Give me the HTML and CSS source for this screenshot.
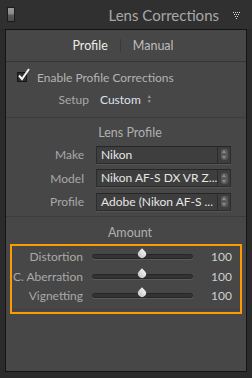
FILE: index.html
```html
<!DOCTYPE html>
<html lang="en">
<head>
  <meta charset="UTF-8">
  <title>Lens Corrections</title>
  <link rel="stylesheet" href="styles.css">
</head>
<body>
  <!-- Panel header -->
  <header class="panel-head">
    <span class="solo-switch"></span>
    <h1>Lens Corrections</h1>
    <svg class="collapse" width="8" height="8" viewBox="0 0 8 8">
      <g fill="#d8d8d8">
        <rect x="0" y="0" width="1" height="1"/><rect x="2" y="0" width="1" height="1"/><rect x="4" y="0" width="1" height="1"/><rect x="6" y="0" width="1" height="1"/>
        <rect x="1" y="2" width="1" height="1"/><rect x="3" y="2" width="1" height="1"/><rect x="5" y="2" width="1" height="1"/>
        <rect x="2" y="4" width="1" height="1"/><rect x="4" y="4" width="1" height="1"/>
        <rect x="3" y="6" width="1" height="1"/>
      </g>
    </svg>
  </header>

  <div class="panel">
    <!-- Tabs -->
    <nav class="tabs">
      <span class="tab active">Profile</span>
      <span class="tab-sep"></span>
      <span class="tab">Manual</span>
    </nav>

    <!-- Enable / setup -->
    <section class="section setup">
      <label class="check-row">
        <span class="checkbox">
          <svg width="14" height="14" viewBox="0 0 14 14"><path d="M2 7.5 L5 11 L12 1" fill="none" stroke="#f2f2f2" stroke-width="2"/></svg>
        </span>
        Enable Profile Corrections
      </label>
      <div class="setup-row">
        <span class="label">Setup</span>
        <span class="popup">Custom <span class="updown">&#9650;<br>&#9660;</span></span>
      </div>
    </section>

    <!-- Lens profile -->
    <section class="section lens">
      <h2>Lens Profile</h2>
      <div class="field">
        <span class="label">Make</span>
        <div class="select"><span class="value">Nikon</span><span class="select-btn"><i></i></span></div>
      </div>
      <div class="field">
        <span class="label">Model</span>
        <div class="select"><span class="value">Nikon AF-S DX VR Z...</span><span class="select-btn"><i></i></span></div>
      </div>
      <div class="field">
        <span class="label">Profile</span>
        <div class="select"><span class="value">Adobe (Nikon AF-S ...</span><span class="select-btn"><i></i></span></div>
      </div>
    </section>

    <!-- Amount -->
    <section class="section amount">
      <h2>Amount</h2>
      <div class="highlight">
        <div class="slider-row">
          <span class="label">Distortion</span>
          <div class="track"><span class="thumb"></span></div>
          <span class="num">100</span>
        </div>
        <div class="slider-row">
          <span class="label">C. Aberration</span>
          <div class="track"><span class="thumb"></span></div>
          <span class="num">100</span>
        </div>
        <div class="slider-row">
          <span class="label">Vignetting</span>
          <div class="track"><span class="thumb"></span></div>
          <span class="num">100</span>
        </div>
        <div class="rule"></div>
      </div>
    </section>
  </div>
</body>
</html>
```

FILE: styles.css
```css
body {
  margin: 0;
  width: 252px;
  height: 378px;
  background: #2b2b2b;
  font-family: Lato, "Open Sans", sans-serif;
  font-size: 12px;
  color: #ababab;
  overflow: hidden;
}
.panel-head {
  height: 29px;
  display: flex;
  align-items: center;
  padding: 0 11px 0 7px;
  background: #303030;
}
.solo-switch {
  width: 6px;
  height: 13px;
  border: 1px solid #1c1c1c;
  background: linear-gradient(#9a9a9a, #8a8a8a 45%, #5a5a5a 55%, #4c4c4c);
}
.panel-head h1 {
  flex: 1;
  margin: 0 14px 0 0;
  text-align: right;
  font-size: 15px;
  font-weight: normal;
  color: #a8a8a8;
}
.collapse {
  margin-top: 2px;
}
.panel {
  margin: 0 5px;
  height: 341px;
  border: 1px solid #141414;
  background: #474747;
}
.tabs {
  height: 31px;
  display: flex;
  align-items: center;
  justify-content: center;
  gap: 12px;
  font-size: 12.5px;
  border-bottom: 1px solid #353535;
  padding-right: 6px;
}
.tab {
  color: #bdbdbd;
}
.tab.active {
  color: #ececec;
}
.tab-sep {
  width: 1px;
  height: 13px;
  background: #3a3a3a;
}
.section {
  border-bottom: 1px solid #3c3c3c;
}
.section h2 {
  margin: 0;
  font-size: 12.5px;
  font-weight: normal;
  color: #b0b0b0;
  text-align: center;
  padding-left: 8px;
}
.label {
  text-align: right;
  color: #a9a9a9;
  white-space: nowrap;
}

/* enable + setup */
.setup {
  height: 55px;
}
.check-row {
  display: flex;
  align-items: center;
  height: 26px;
  padding: 4px 0 0 11px;
  color: #b3b3b3;
  box-sizing: border-box;
}
.checkbox {
  position: relative;
  width: 10px;
  height: 10px;
  border: 1px solid #151515;
  background: #2e2e2e;
  margin-right: 10px;
  box-sizing: border-box;
}
.checkbox svg {
  position: absolute;
  left: -1px;
  top: -5px;
}
.setup-row {
  display: flex;
  align-items: center;
  height: 22px;
  gap: 11px;
}
.setup-row .label {
  width: 83px;
}
.popup {
  display: flex;
  align-items: center;
  color: #dfe0ef;
  gap: 6px;
}
.updown {
  font-size: 5px;
  line-height: 5px;
  color: #9a9a9a;
}

/* lens profile */
.lens {
  height: 99px;
  padding-top: 8px;
  box-sizing: border-box;
}
.lens h2 {
  height: 14px;
  line-height: 14px;
  margin-bottom: 3px;
}
.field {
  display: flex;
  align-items: center;
  height: 23.5px;
  gap: 12px;
}
.field .label {
  width: 78px;
}
.select {
  width: 133px;
  height: 16px;
  display: flex;
  border: 1px solid #2c2c2c;
  border-top-color: #262626;
  background: #3e3e3e;
  box-shadow: 0 1px 0 #555;
}
.select .value {
  flex: 1;
  padding-left: 4px;
  line-height: 16px;
  color: #e6e6e6;
  white-space: nowrap;
  overflow: hidden;
}
.select-btn {
  width: 12px;
  border-left: 1px solid #2c2c2c;
  display: flex;
  align-items: center;
  justify-content: center;
}
.select-btn i {
  width: 7px;
  height: 11px;
  border-radius: 3px;
  background: #5a5a5a;
  position: relative;
}
.select-btn i::before,
.select-btn i::after {
  content: "";
  position: absolute;
  left: 1px;
  border-left: 2.5px solid transparent;
  border-right: 2.5px solid transparent;
}
.select-btn i::before {
  top: 1px;
  border-bottom: 3px solid #8c8c8c;
}
.select-btn i::after {
  bottom: 1px;
  border-top: 3px solid #8c8c8c;
}

/* amount */
.amount {
  border-bottom: none;
  padding-top: 9px;
}
.amount h2 {
  height: 14px;
  line-height: 14px;
}
.highlight {
  margin: 4px 4px 0 4px;
  border: 2px solid #ff9a00;
  height: 65px;
  padding-top: 1px;
}
.slider-row {
  display: flex;
  align-items: center;
  height: 19.5px;
}
.slider-row .label {
  width: 71px;
}
.track {
  position: relative;
  width: 99px;
  height: 3px;
  margin-left: 9px;
  border: 1px solid #262626;
  border-radius: 3px;
  background: #333;
  box-shadow: 0 1px 0 #5a5a5a;
}
.thumb {
  position: absolute;
  left: 45px;
  top: -5px;
  width: 8px;
  height: 8px;
  background: linear-gradient(#f0f0f0, #c8c8c8);
  border-radius: 0 50% 50% 50%;
  transform: rotate(45deg);
}
.num {
  margin-left: auto;
  margin-right: 8px;
  color: #d0d0d0;
}
.rule {
  height: 1px;
  margin-top: 3px;
  background: #404040;
}
```
